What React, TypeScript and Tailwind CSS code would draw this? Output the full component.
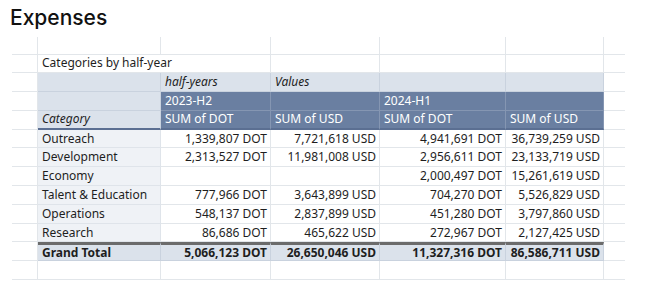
import React from "react";

type Kind = "blank" | "light" | "dark" | "label" | "data" | "total";
type Cell = { t?: string; k: Kind; align?: "l" | "r"; italic?: boolean; noR?: boolean; bb?: string; bt?: boolean };

const widths = ["w-[26px]", "w-[123px]", "w-[110px]", "w-[109px]", "w-[126px]", "w-[98px]", "w-[21px]"];

const dataRows: [string, string, string, string, string][] = [
  ["Outreach", "1,339,807 DOT", "7,721,618 USD", "4,941,691 DOT", "36,739,259 USD"],
  ["Development", "2,313,527 DOT", "11,981,008 USD", "2,956,611 DOT", "23,133,719 USD"],
  ["Economy", "", "", "2,000,497 DOT", "15,261,619 USD"],
  ["Talent & Education", "777,966 DOT", "3,643,899 USD", "704,270 DOT", "5,526,829 USD"],
  ["Operations", "548,137 DOT", "2,837,899 USD", "451,280 DOT", "3,797,860 USD"],
  ["Research", "86,686 DOT", "465,622 USD", "272,967 DOT", "2,127,425 USD"],
];

function buildRows(): Cell[][] {
  const rows: Cell[][] = [];
  rows.push([{ k: "blank" }, { k: "blank" }, { k: "blank" }, { k: "blank" }, { k: "blank" }]);
  rows.push([
    { k: "blank", t: "Categories by half-year", noR: true },
    { k: "blank" },
    { k: "blank" },
    { k: "blank" },
    { k: "blank" },
  ]);
  rows.push([
    { k: "light" },
    { k: "light", t: "half-years", italic: true },
    { k: "light", t: "Values", italic: true },
    { k: "light" },
    { k: "light" },
  ]);
  rows.push([
    { k: "light" },
    { k: "dark", t: "2023-H2" },
    { k: "dark" },
    { k: "dark", t: "2024-H1" },
    { k: "dark" },
  ]);
  rows.push([
    { k: "light", t: "Category", italic: true, bb: "blue" },
    { k: "dark", t: "SUM of DOT", bb: "blue" },
    { k: "dark", t: "SUM of USD", bb: "blue" },
    { k: "dark", t: "SUM of DOT", bb: "blue" },
    { k: "dark", t: "SUM of USD", bb: "blue" },
  ]);
  dataRows.forEach((r) => {
    rows.push([
      { k: "label", t: r[0] },
      { k: "data", t: r[1], align: "r" },
      { k: "data", t: r[2], align: "r" },
      { k: "data", t: r[3], align: "r" },
      { k: "data", t: r[4], align: "r" },
    ]);
  });
  rows.push([
    { k: "total", t: "Grand Total", bt: true },
    { k: "total", t: "5,066,123 DOT", align: "r", bt: true },
    { k: "total", t: "26,650,046 USD", align: "r", bt: true },
    { k: "total", t: "11,327,316 DOT", align: "r", bt: true },
    { k: "total", t: "86,586,711 USD", align: "r", bt: true },
  ]);
  rows.push([{ k: "blank" }, { k: "blank" }, { k: "blank" }, { k: "blank" }, { k: "blank" }]);
  return rows;
}

function cellClass(c: Cell, col: number): string {
  const parts: string[] = [widths[col], "h-full shrink-0 flex items-center whitespace-nowrap border-b"];
  if (c.noR) parts.push("border-r-0");
  else parts.push("border-r");
  switch (c.k) {
    case "blank":
      parts.push("bg-transparent border-[#e2e6ea] text-[#1e1e1e]");
      break;
    case "light":
      parts.push("bg-[#dbe2eb] border-[#c9d2de] text-[#1e1e1e]");
      break;
    case "dark":
      parts.push("bg-[#6a7fa1] border-[#8596b2] text-white");
      break;
    case "label":
      parts.push("bg-[#eff2f6] border-[#dfe4ea] text-[#1e1e1e]");
      break;
    case "data":
      parts.push("bg-white border-[#e2e6ea] text-[#1e1e1e]");
      break;
    case "total":
      parts.push("bg-[#dbe2eb] border-[#c9d2de] text-[#1e1e1e] font-bold");
      break;
  }
  if (c.bb === "blue") parts.push("border-b-[#5b6f92] border-b-2");
  if (c.bt) parts.push("border-t-[3px] border-t-[#6b6b6b]");
  if (c.align === "r") parts.push("justify-end pr-[3px]");
  else parts.push("pl-[4px]");
  if (c.italic) parts.push("italic");
  return parts.join(" ");
}

export default function App() {
  const rows = buildRows();
  return (
    <div className="w-[650px] h-[290px] bg-white overflow-hidden" style={{ fontFamily: "'Noto Sans', sans-serif" }}>
      <div
        className="pt-[4px] pl-[10px] h-[37px] text-[21px] leading-[28px] font-medium text-[#111111]"
        style={{ fontFamily: "Inter, sans-serif" }}
      >
        Expenses
      </div>
      <div className="ml-[12px] flex flex-col text-[12px] leading-[16px]">
        {rows.map((r, i) => (
          <div key={i} className={`flex ${i === 0 ? "h-[17.5px]" : "h-[18.8px]"}`}>
            <div className={`${widths[0]} h-full shrink-0 border-b border-r border-[#e2e6ea]`} />
            {r.map((c, j) => (
              <div key={j} className={cellClass(c, j + 1)}>
                {c.t ?? ""}
              </div>
            ))}
            <div className={`${widths[6]} h-full shrink-0 border-b border-[#e2e6ea]`} />
          </div>
        ))}
      </div>
    </div>
  );
}
